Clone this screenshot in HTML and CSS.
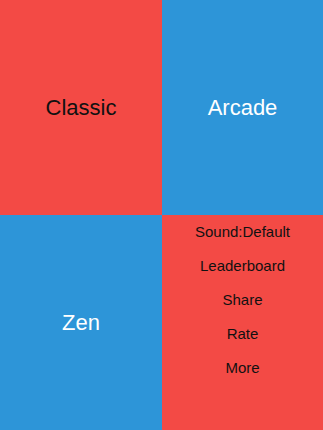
FILE: index.html
```html
<!DOCTYPE html>
<html lang="en">
<head>
    <meta charset="UTF-8">
    <meta name="viewport" content="width=device-width, initial-scale=1.0">
    <title>Modes</title>
    <link rel="stylesheet" href="styles.css">
</head>
<body>
    <div class="board">
        <div class="tile red">Classic</div>
        <div class="tile blue">Arcade</div>
        <div class="tile blue">Zen</div>
        <div class="tile red menu">
            <div class="item">Sound:Default</div>
            <div class="item">Leaderboard</div>
            <div class="item">Share</div>
            <div class="item">Rate</div>
            <div class="item">More</div>
        </div>
    </div>
</body>
</html>
```

FILE: styles.css
```css
body {
    margin: 0;
    font-family: "Liberation Sans", Arial, sans-serif;
}

.board {
    display: grid;
    grid-template-columns: 162px 161px;
    grid-template-rows: 215px 215px;
    width: 323px;
    height: 430px;
}

.tile {
    display: flex;
    align-items: center;
    justify-content: center;
    font-size: 22px;
}

.red {
    background-color: #f34a45;
    color: #111;
}

.blue {
    background-color: #2d95d8;
    color: white;
}

.menu {
    flex-direction: column;
    justify-content: flex-start;
}

.menu .item {
    height: 34px;
    line-height: 34px;
    font-size: 15px;
    text-align: center;
}
```
